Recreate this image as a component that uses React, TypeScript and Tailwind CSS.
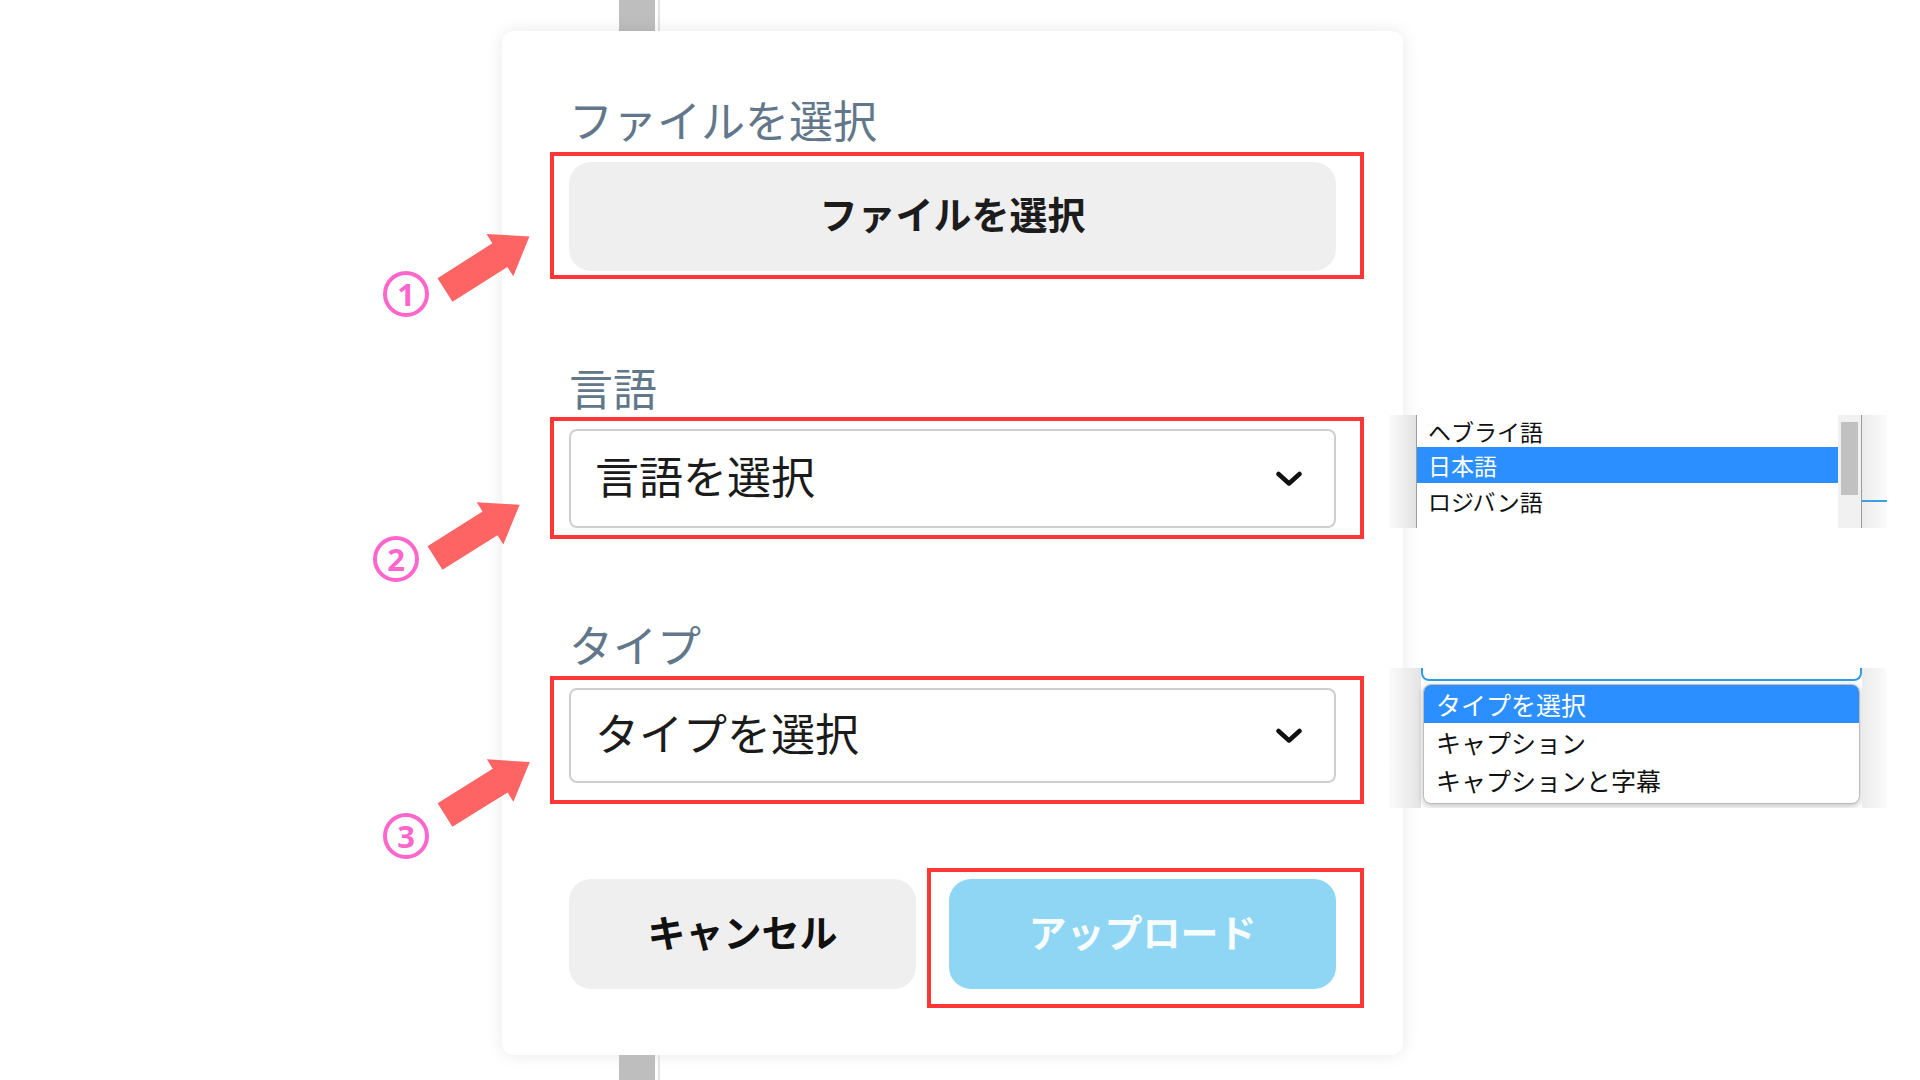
import { FC } from 'react';

const LABEL = 'text-[44px] leading-[44px] text-[#627789]';

const languages = ['ヘブライ語', '日本語', 'ロジバン語', 'ルーマニア語'];
const types = ['タイプを選択', 'キャプション', 'キャプションと字幕'];

// red annotation frame drawn over a field
const RedBox: FC<{ className: string }> = ({ className }) => (
  <div className={`pointer-events-none absolute border-4 border-[#ff3636] ${className}`} />
);

const Chevron: FC = () => (
  <svg width="28" height="16" viewBox="0 0 28 16" fill="none">
    <path d="M3.5 3 L14 12.5 L24.5 3" stroke="#111" strokeWidth="4.5" strokeLinecap="round" strokeLinejoin="round" />
  </svg>
);

const FakeSelect: FC<{ text: string; height: string }> = ({ text, height }) => (
  <div className={`flex items-center justify-between rounded-[8px] border-2 border-[#cfcfcf] bg-white pl-[24px] pr-[31px] ${height}`}>
    <span className="mb-[8px] text-[44px] leading-none text-[#1b1b1b]">{text}</span>
    <Chevron />
  </div>
);

const Badge: FC<{ n: string; className: string }> = ({ n, className }) => (
  <div
    className={`absolute flex h-[46px] w-[46px] items-center justify-center rounded-full border-4 border-[#ff66cc] font-['Noto_Sans',sans-serif] text-[31px] font-bold leading-none text-[#ff66cc] ${className}`}
  >
    {n}
  </div>
);

const ARROW = '0,-14 65,-14 65,-25 100,0 65,25 65,14 0,14';

const LanguageList: FC = () => (
  <div className="absolute left-[1389px] top-[415px] flex h-[113px] w-[498px] overflow-hidden">
    <div className="w-[27px] bg-linear-to-r from-[#fbfbfb] to-[#e2e2e2]" />
    <div className="flex w-[446px] border-x border-[#9c9c9c] bg-white">
      <ul className="flex-1 text-[23px] leading-[36px] text-[#111]">
        {languages.map((lang, i) => (
          <li
            key={lang}
            className={`pl-[11px] ${i === 0 ? 'leading-[32px]' : ''} ${lang === '日本語' ? 'bg-[#2c8fff] text-white' : ''}`}
          >
            {lang}
          </li>
        ))}
      </ul>
      <div className="w-[23px] bg-[#f1f1f1] px-[3px] pt-[7px]">
        <div className="h-[73px] bg-[#c1c1c1]" />
      </div>
    </div>
    <div className="relative flex-1 bg-linear-to-r from-[#ebebeb] to-[#fbfbfb]">
      <div className="absolute left-0 right-0 top-[85px] h-[2px] bg-[#3aa0e0]" />
    </div>
  </div>
);

const TypeList: FC = () => (
  <div className="absolute left-[1389px] top-[668px] flex h-[140px] w-[498px] overflow-hidden">
    <div className="w-[32px] bg-linear-to-r from-[#fbfbfb] to-[#e4e4e4]" />
    <div className="flex w-[441px] flex-col bg-white">
      <div className="h-[13px] rounded-b-[8px] border-x-2 border-b-2 border-[#2e9ee0]" />
      <ul className="mx-[2px] mt-[3px] overflow-hidden rounded-[8px] border border-[#bdbdbd] bg-white pb-[4px] text-[25px] leading-[38px] text-[#111] shadow-[0_2px_6px_rgba(0,0,0,0.25)]">
        {types.map((t, i) => (
          <li key={t} className={`pl-[12px] ${i === 0 ? 'bg-[#2c8fff] text-white' : ''}`}>
            {t}
          </li>
        ))}
      </ul>
    </div>
    <div className="flex-1 bg-linear-to-r from-[#ebebeb] to-[#fbfbfb]" />
  </div>
);

const App: FC = () => {
  return (
    <div className="relative h-[1080px] w-[1920px] overflow-hidden bg-white font-['Noto_Sans_CJK_JP','Noto_Sans',sans-serif]">
      <div className="ml-[502px] flex w-[901px] flex-col">
        <div className="ml-[117px] flex h-[31px]">
          <div className="w-[36px] bg-[#bebebe]" />
          <div className="ml-[3px] w-[2px] bg-[#e2e2e2]" />
        </div>

        <div className="flex h-[1024px] flex-col rounded-[12px] bg-white px-[67px] pt-[66px] shadow-[0_0_18px_rgba(0,0,0,0.09)]">
          <div className={LABEL}>ファイルを選択</div>
          <div className="relative mt-[21px]">
            <button className="flex h-[109px] w-full items-center justify-center rounded-[22px] bg-[#efefef] pb-[8px] text-[38px] font-bold text-[#1c1c1c]">
              ファイルを選択
            </button>
            <RedBox className="-bottom-[8px] -left-[19px] -right-[28px] -top-[10px]" />
          </div>

          <div className={`mt-[94px] ${LABEL}`}>言語</div>
          <div className="relative mt-[20px]">
            <FakeSelect text="言語を選択" height="h-[99px]" />
            <RedBox className="-bottom-[11px] -left-[19px] -right-[28px] -top-[12px]" />
          </div>

          <div className={`mt-[94px] ${LABEL}`}>タイプ</div>
          <div className="relative mt-[22px]">
            <FakeSelect text="タイプを選択" height="h-[95px]" />
            <RedBox className="-bottom-[21px] -left-[19px] -right-[28px] -top-[12px]" />
          </div>

          <div className="mt-[96px] flex gap-[33px]">
            <button className="h-[110px] w-[347px] rounded-[22px] bg-[#efefef] pb-[8px] text-[38px] font-bold text-[#111]">
              キャンセル
            </button>
            <div className="relative flex-1">
              <button className="h-[110px] w-full rounded-[22px] bg-[#8fd6f5] pb-[8px] text-[38px] font-bold text-[#f6fcff]">
                アップロード
              </button>
              <RedBox className="-bottom-[19px] -left-[22px] -right-[28px] -top-[11px]" />
            </div>
          </div>
        </div>

        <div className="ml-[117px] flex h-[25px]">
          <div className="w-[36px] bg-[#bebebe]" />
          <div className="ml-[3px] w-[2px] bg-[#e2e2e2]" />
        </div>
      </div>

      <svg className="absolute left-0 top-0" width="560" height="1080">
        <polygon points={ARROW} fill="#ff6464" transform="translate(445 290) rotate(-32.4)" />
        <polygon points={ARROW} fill="#ff6464" transform="translate(435 558) rotate(-32.2)" />
        <polygon points={ARROW} fill="#ff6464" transform="translate(445 815) rotate(-32)" />
      </svg>

      <Badge n="1" className="left-[383px] top-[271px]" />
      <Badge n="2" className="left-[373px] top-[536px]" />
      <Badge n="3" className="left-[383px] top-[813px]" />

      <LanguageList />
      <TypeList />
    </div>
  );
};

export default App;
